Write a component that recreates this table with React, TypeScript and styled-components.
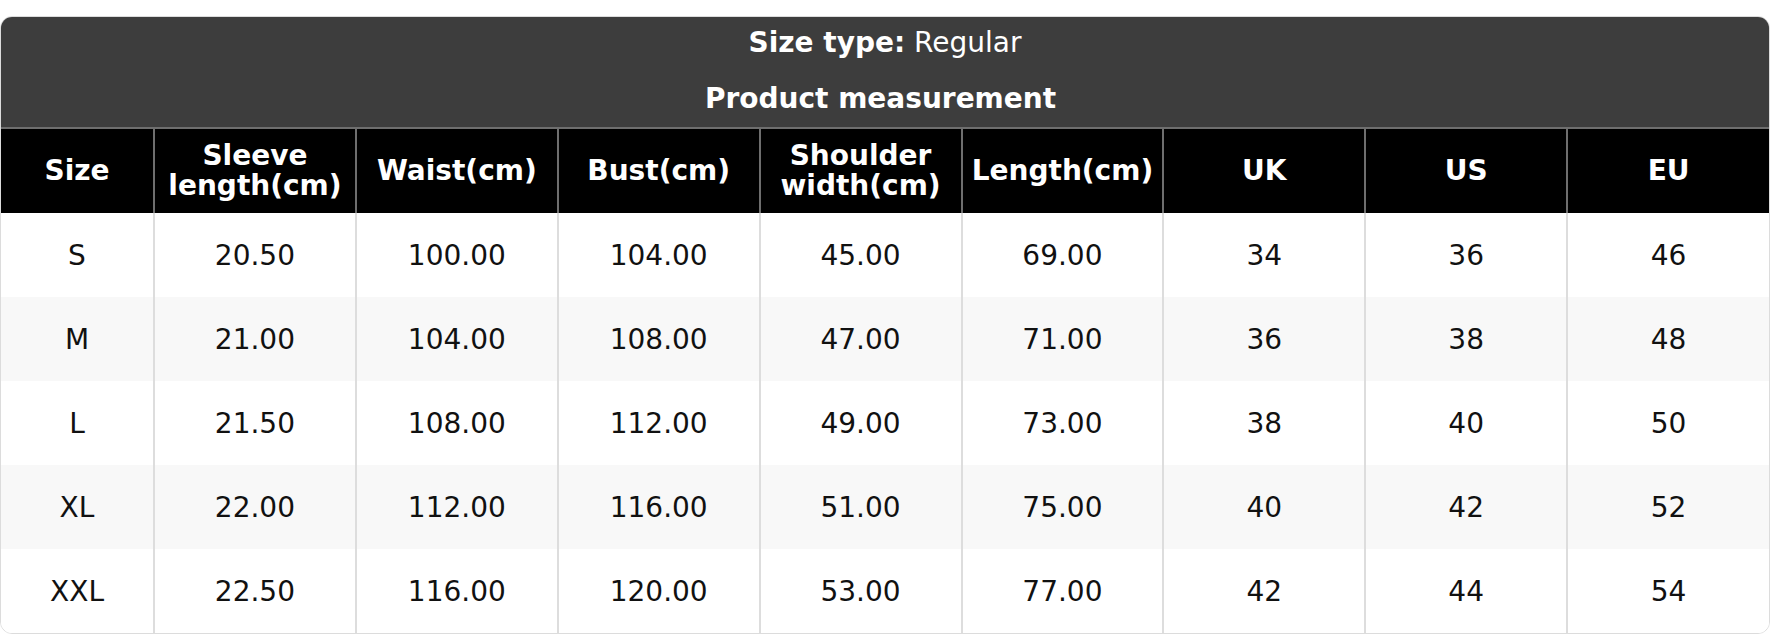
import React from "react";
import styled, { createGlobalStyle } from "styled-components";

const GlobalStyle = createGlobalStyle`
  html, body {
    margin: 0;
    padding: 0;
    background: #ffffff;
  }
  body {
    font-family: "DejaVu Sans", "Noto Sans", sans-serif;
  }
`;

const Page = styled.div`
  padding-top: 16px;
`;

const Card = styled.div`
  width: 1770px;
  box-sizing: border-box;
  border: 1px solid #dcdcdc;
  border-radius: 12px;
  overflow: hidden;
  background: #ffffff;
`;

const TitleBand = styled.div`
  background: #3d3d3d;
  color: #ffffff;
  display: flex;
  flex-direction: column;
  align-items: center;
  gap: 24px;
  padding: 10px 0 12px;
  font-size: 28px;
  line-height: 32px;
`;

const TitleLine = styled.div<{ $bold?: boolean; $shift?: number }>`
  font-weight: ${(p) => (p.$bold ? 700 : 400)};
  white-space: nowrap;
  margin-right: ${(p) => p.$shift ?? 0}px;
`;

const Strong = styled.span`
  font-weight: 700;
`;

const Table = styled.table`
  width: 100%;
  border-collapse: collapse;
  table-layout: fixed;
`;

const SizeCol = styled.col`
  width: 153px;
`;

const HeadCell = styled.th<{ $first?: boolean }>`
  background: #000000;
  color: #ffffff;
  font-weight: 700;
  font-size: 28px;
  line-height: 30px;
  height: 85px;
  padding: 0 4px;
  box-sizing: border-box;
  text-align: center;
  vertical-align: middle;
  border-top: 2px solid #6e6e6e;
  border-left: ${(p) => (p.$first ? "none" : "2px solid #6e6e6e")};
`;

const Row = styled.tr<{ $striped?: boolean }>`
  background: ${(p) => (p.$striped ? "#f8f8f8" : "#ffffff")};
`;

const Cell = styled.td<{ $first?: boolean }>`
  font-size: 28px;
  color: #111111;
  height: 84px;
  padding: 0;
  box-sizing: border-box;
  text-align: center;
  vertical-align: middle;
  border-left: ${(p) => (p.$first ? "none" : "2px solid #dddddd")};
`;

const headers = [
  ["Size"],
  ["Sleeve", "length(cm)"],
  ["Waist(cm)"],
  ["Bust(cm)"],
  ["Shoulder", "width(cm)"],
  ["Length(cm)"],
  ["UK"],
  ["US"],
  ["EU"],
];

const rows = [
  ["S", "20.50", "100.00", "104.00", "45.00", "69.00", "34", "36", "46"],
  ["M", "21.00", "104.00", "108.00", "47.00", "71.00", "36", "38", "48"],
  ["L", "21.50", "108.00", "112.00", "49.00", "73.00", "38", "40", "50"],
  ["XL", "22.00", "112.00", "116.00", "51.00", "75.00", "40", "42", "52"],
  ["XXL", "22.50", "116.00", "120.00", "53.00", "77.00", "42", "44", "54"],
];

export default function App() {
  return (
    <>
      <GlobalStyle />
      <Page>
        <Card>
          <TitleBand>
            <TitleLine>
              <Strong>Size type:</Strong> Regular
            </TitleLine>
            <TitleLine $bold $shift={9}>
              Product measurement
            </TitleLine>
          </TitleBand>
          <Table>
            <colgroup>
              <SizeCol />
              {headers.slice(1).map((_, i) => (
                <col key={i} />
              ))}
            </colgroup>
            <thead>
              <tr>
                {headers.map((h, i) => (
                  <HeadCell key={i} $first={i === 0}>
                    {h.map((line, j) => (
                      <React.Fragment key={j}>
                        {j > 0 && <br />}
                        {line}
                      </React.Fragment>
                    ))}
                  </HeadCell>
                ))}
              </tr>
            </thead>
            <tbody>
              {rows.map((r, i) => (
                <Row key={i} $striped={i % 2 === 1}>
                  {r.map((v, j) => (
                    <Cell key={j} $first={j === 0}>
                      {v}
                    </Cell>
                  ))}
                </Row>
              ))}
            </tbody>
          </Table>
        </Card>
      </Page>
    </>
  );
}
